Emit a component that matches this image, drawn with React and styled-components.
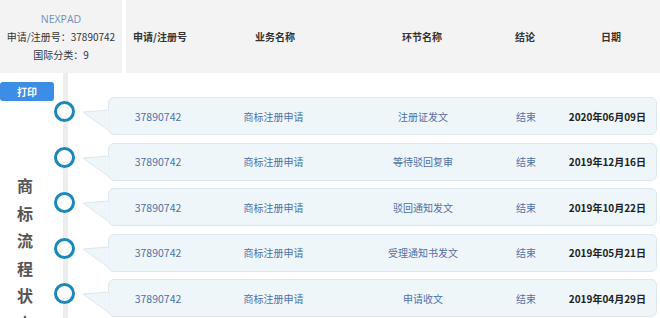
import styled, { createGlobalStyle } from "styled-components";

const GlobalStyle = createGlobalStyle`
    html, body {
        margin: 0;
        padding: 0;
        background: #ffffff;
        font-family: "Noto Sans CJK SC", "Noto Sans", sans-serif;
        overflow: hidden;
    }
`;

const Page = styled.div`
    width: 660px;
    height: 318px;
    overflow: hidden;
    background: #ffffff;
`;

const HeaderBand = styled.div`
    display: flex;
    gap: 4px;
    height: 73px;
`;

const InfoCell = styled.div`
    width: 122px;
    background: #f3f3f3;
    display: flex;
    flex-direction: column;
    align-items: center;
    justify-content: center;
    font-size: 10px;
    line-height: 18px;
    color: #333;
`;

const Brand = styled.div`
    color: #6f8fc0;
    font-family: "Open Sans", "Noto Sans", sans-serif;
    font-size: 10.5px;
`;

const HeadRow = styled.div`
    flex: 1;
    background: #f3f3f3;
    display: grid;
    grid-template-columns: 68px 162px 132px 74px 98px;
    align-items: center;
    font-size: 10px;
    font-weight: bold;
    color: #333;
`;

const HeadCell = styled.div`
    text-align: center;
    white-space: nowrap;
`;

const Body = styled.div`
    display: flex;
`;

const SideCol = styled.div`
    width: 54px;
    display: flex;
    flex-direction: column;
    align-items: flex-start;
    padding-top: 9px;
`;

const PrintButton = styled.button`
    width: 54px;
    height: 19px;
    border: none;
    border-radius: 3px;
    background: #3b8de6;
    color: #fff;
    font-family: "Noto Sans CJK SC", sans-serif;
    font-size: 10px;
    font-weight: bold;
    padding: 0;
`;

const Title = styled.div`
    margin-top: 71px;
    margin-left: 17px;
    width: 17px;
    font-size: 16px;
    font-weight: bold;
    line-height: 27.5px;
    color: #555;
`;

const Timeline = styled.div`
    position: relative;
    flex: 1;
    display: flex;
    flex-direction: column;
    gap: 7.5px;
    padding-top: 24px;

    &::before {
        content: "";
        position: absolute;
        left: 9px;
        top: 0;
        width: 5px;
        height: 260px;
        background: #ededed;
    }
`;

const Row = styled.div`
    position: relative;
    display: flex;
`;

const Node = styled.div`
    position: relative;
    width: 54px;
    flex-shrink: 0;
`;

const Dot = styled.span`
    position: absolute;
    left: 0;
    top: 4px;
    width: 15px;
    height: 15px;
    border: 3.5px solid #1a88bb;
    border-radius: 50%;
    background: #fff;
`;

const Pointer = styled.svg`
    position: absolute;
    left: 28px;
    top: 12px;
    overflow: visible;
`;

const Card = styled.div`
    flex: 1;
    height: 36px;
    margin-right: 3px;
    border: 1px solid #dde8ee;
    border-radius: 6px;
    background: #eef6fa;
    display: grid;
    grid-template-columns: 98px 133px 166px 40px 1fr;
    align-items: center;
    font-size: 10px;
    color: #4f70a8;
`;

const Cell = styled.div`
    text-align: center;
    white-space: nowrap;
`;

const Number = styled(Cell)`
    font-size: 10.5px;
`;

const DateCell = styled.div`
    justify-self: end;
    padding-right: 10px;
    white-space: nowrap;
    font-weight: bold;
    color: #222;
`;

const rows = [
    { step: "注册证发文", date: "2020年06月09日" },
    { step: "等待驳回复审", date: "2019年12月16日" },
    { step: "驳回通知发文", date: "2019年10月22日" },
    { step: "受理通知书发文", date: "2019年05月21日" },
    { step: "申请收文", date: "2019年04月29日" },
];

export default function App() {
    return (
        <Page>
            <GlobalStyle />
            <HeaderBand>
                <InfoCell>
                    <Brand>NEXPAD</Brand>
                    <div>申请/注册号：37890742</div>
                    <div>国际分类：9</div>
                </InfoCell>
                <HeadRow>
                    <HeadCell>申请/注册号</HeadCell>
                    <HeadCell>业务名称</HeadCell>
                    <HeadCell>环节名称</HeadCell>
                    <HeadCell>结论</HeadCell>
                    <HeadCell>日期</HeadCell>
                </HeadRow>
            </HeaderBand>
            <Body>
                <SideCol>
                    <PrintButton>打印</PrintButton>
                    <Title>商标流程状态</Title>
                </SideCol>
                <Timeline>
                    {rows.map((r) => (
                        <Row key={r.date}>
                            <Node>
                                <Dot />
                                <Pointer width="27" height="24" viewBox="0 0 27 24">
                                    <polygon points="1,3 27,1 27,22" fill="#eef6fa" stroke="#dde8ee" strokeWidth="1" />
                                    <line x1="26.5" y1="1.5" x2="26.5" y2="21.5" stroke="#eef6fa" strokeWidth="2" />
                                </Pointer>
                            </Node>
                            <Card>
                                <Number>37890742</Number>
                                <Cell>商标注册申请</Cell>
                                <Cell>{r.step}</Cell>
                                <Cell>结束</Cell>
                                <DateCell>{r.date}</DateCell>
                            </Card>
                        </Row>
                    ))}
                </Timeline>
            </Body>
        </Page>
    );
}
